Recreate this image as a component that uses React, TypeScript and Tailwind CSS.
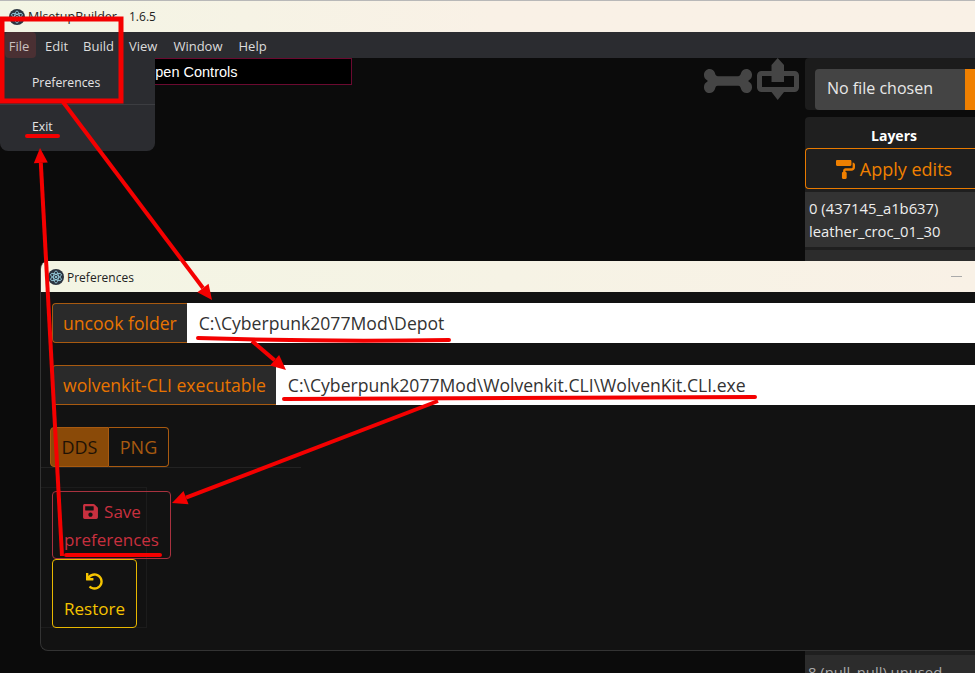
import React from "react";
import { FaBone, FaPaintRoller, FaSave, FaUndo } from "react-icons/fa";

const Logo = () => (
  <svg width="16" height="16" viewBox="0 0 16 16" className="shrink-0">
    <circle cx="8" cy="8" r="8" fill="#2b3440" />
    <g fill="none" stroke="#9fd8ea" strokeWidth="0.8">
      <ellipse cx="8" cy="8" rx="6" ry="2.4" transform="rotate(30 8 8)" />
      <ellipse cx="8" cy="8" rx="6" ry="2.4" transform="rotate(90 8 8)" />
      <ellipse cx="8" cy="8" rx="6" ry="2.4" transform="rotate(150 8 8)" />
    </g>
    <circle cx="8" cy="8" r="1.1" fill="#9fd8ea" />
  </svg>
);

const Arrow = ({ x1, y1, x2, y2, w = 4 }: { x1: number; y1: number; x2: number; y2: number; w?: number }) => {
  const a = Math.atan2(y2 - y1, x2 - x1);
  const l = 15;
  const s = 7;
  const bx = x2 - l * Math.cos(a);
  const by = y2 - l * Math.sin(a);
  const px = -Math.sin(a) * s;
  const py = Math.cos(a) * s;
  return (
    <g>
      <line x1={x1} y1={y1} x2={bx} y2={by} stroke="#f40000" strokeWidth={w} />
      <polygon points={`${x2},${y2} ${bx + px},${by + py} ${bx - px},${by - py}`} fill="#f40000" />
    </g>
  );
};

const Under = ({ d }: { d: string }) => <path d={d} stroke="#f40000" strokeWidth="4" strokeLinecap="round" fill="none" />;

const Field = ({ label, value }: { label: string; value: string }) => (
  <div className="flex h-10 items-stretch">
    <div className="flex items-center rounded-l border border-r-0 border-[#a85a10] bg-[#2a2a2a] px-[10px] text-[17.6px] text-[#e87400]">
      {label}
    </div>
    <div className="flex flex-1 items-center bg-white pl-3 text-[17.6px] text-[#333]">{value}</div>
  </div>
);

export default function App() {
  return (
    <div
      className="relative h-[673px] w-[975px] overflow-hidden bg-[#0b0b0b] text-[13px]"
      style={{ fontFamily: '"Open Sans", "Noto Sans", sans-serif' }}
    >
      <div className="h-px bg-[#b8b8b8]" />
      <div className="flex h-[31px] items-center gap-[3px] bg-gradient-to-r from-[#f3f5e4] via-[#f9f1e6] to-[#f9f1e6] pl-[9px] pt-px text-[#222]">
        <Logo />
        <span className="w-[98px] whitespace-nowrap text-[12.5px]">MlsetupBuilder</span>
        <span className="text-[12px]">1.6.5</span>
      </div>
      <nav className="flex h-[26px] items-stretch bg-[#2b2c30] pl-[5px] text-[13px] text-[#dcdcdc]">
        <span className="flex w-[31px] items-center justify-center rounded-sm bg-[#4a3033] pr-[3px] pt-[3px] text-[#c9c0c0]">File</span>
        <span className="ml-[9px] flex items-center pt-[3px]">Edit</span>
        <span className="ml-[15px] flex items-center pt-[3px]">Build</span>
        <span className="ml-[15px] flex items-center pt-[3px]">View</span>
        <span className="ml-[16px] flex items-center pt-[3px]">Window</span>
        <span className="ml-[16px] flex items-center pt-[3px]">Help</span>
      </nav>

      <div className="flex h-[615px]">
        <main className="flex flex-1 items-start justify-between pl-[100px] pr-[5px]">
          <div
            className="flex h-[27px] w-[252px] items-center border border-[#6b0a30] bg-black pl-[43px] pt-[3px] text-[14.5px] text-white"
            style={{ fontFamily: '"Liberation Sans", sans-serif' }}
          >
            Open Controls
          </div>
          <div className="flex items-start gap-[5px] text-[#454545]">
            <FaBone size={48} className="-mt-[1px]" />
            <svg width="43" height="42" viewBox="0 0 43 42">
              <path d="M20.7 0L27 7V24H14.5V7Z M14.5 34H27L20.7 42Z" fill="#454545" />
              <rect x="2.5" y="15.5" width="37" height="16" rx="2" fill="none" stroke="#454545" strokeWidth="5" />
            </svg>
          </div>
        </main>
        <aside className="flex w-[170px] flex-col gap-[7px]">
          <div className="h-[52px] rounded-l bg-[#1c1c1c] pl-[10px] pt-[11px]">
            <div className="flex h-[41px] overflow-hidden rounded-l bg-[#444]">
              <span className="flex flex-1 items-center pb-1 pl-3 text-[16px] text-[#e8e8e8]">No file chosen</span>
              <span className="w-[10px] bg-[#f08000]" />
            </div>
          </div>
          <div className="flex flex-1 flex-col rounded-tl bg-[#1f1f1f]">
            <div className="flex h-[31px] items-center justify-center pl-[8px] pt-[5px] text-[14px] font-bold text-white">Layers</div>
            <div className="flex h-[41px] items-center justify-center gap-[5px] rounded-l border border-r-0 border-[#e87a00] pl-[7px] pt-[1px] text-[18px] text-[#f08000]">
              <FaPaintRoller size={19} />
              Apply edits
            </div>
            <div className="mt-[3px] flex h-[55px] flex-col justify-center bg-[#333] pl-1 text-[14.8px] leading-[23px] text-[#eee]">
              <span>0 (437145_a1b637)</span>
              <span>leather_croc_01_30</span>
            </div>
            <div className="mt-[3px] h-[16px] bg-[#2c2c2c]" />
            <div className="flex-1" />
            <div className="h-[18px] overflow-hidden bg-[#2c2c2c] pl-[3px] text-[14.8px] leading-[34px] text-[#aaa]">8 (null_null) unused</div>
          </div>
        </aside>
      </div>

      <div className="absolute left-0 top-[58px] flex h-[93px] w-[155px] flex-col rounded-b-lg bg-[#2b2c30] text-[12.25px] text-[#e4e4e4]">
        <div className="flex h-[46px] items-center pl-[32px] pt-[4px]">Preferences</div>
        <div className="h-px bg-[#3c3d41]" />
        <div className="flex flex-1 items-center pb-[2px] pl-[32px]">Exit</div>
      </div>

      <section className="absolute left-[40px] top-[261px] flex h-[390px] w-[935px] flex-col overflow-hidden rounded-l-lg border-b border-l border-[#333] bg-[#121212]">
        <header className="flex h-[31px] shrink-0 items-center gap-[3px] bg-gradient-to-r from-[#f3f5e4] to-[#f9f1e6] pl-[7px] pr-[13px] text-[12px] text-[#222]">
          <Logo />
          <span className="flex-1 pt-[3px]">Preferences</span>
          <span className="h-px w-[11px] bg-[#aaa]" />
        </header>
        <div className="flex flex-col pl-[11px] pt-[11px]">
          <Field label="uncook folder" value={"C:\\Cyberpunk2077Mod\\Depot"} />
          <div className="h-[22px]" />
          <Field label="wolvenkit-CLI executable" value={"C:\\Cyberpunk2077Mod\\Wolvenkit.CLI\\WolvenKit.CLI.exe"} />
          <div className="mt-[22px] flex h-10 w-[119px] -translate-x-[2px] text-[18px]">
            <span className="flex w-[59px] items-center justify-center rounded-l border border-[#a85a10] bg-[#8a4a08] text-[#1e1206]">DDS</span>
            <span className="flex flex-1 items-center justify-center rounded-r border border-l-0 border-[#a85a10] text-[#a85a10]">PNG</span>
          </div>
        </div>
        <div className="h-px w-[260px] bg-[#222]" />
        <div className="mt-[19px] flex h-[141px] w-[106px] flex-col items-start border border-l-0 border-[#1c1c1c] pl-[11px] pt-[3px]">
          <button className="flex h-[68px] w-[119px] shrink-0 flex-col items-center justify-center rounded border border-[#a8323f] pt-[1px] text-[17px] leading-[28px] text-[#c8303f]">
            <span className="flex items-center gap-[5px]">
              <FaSave size={17} />
              Save
            </span>
            <span>preferences</span>
          </button>
          <button className="flex h-[69px] w-[85px] shrink-0 flex-col items-center justify-center rounded border border-[#e8b800] pt-[9px] text-[17px] leading-[28px] text-[#f5c400]">
            <FaUndo size={17} className="mb-[5px]" />
            <span>Restore</span>
          </button>
        </div>
      </section>

      <svg className="pointer-events-none absolute left-0 top-0" width="975" height="673" viewBox="0 0 975 673">
        <rect x="2" y="19" width="119" height="82" fill="none" stroke="#f40000" strokeWidth="5" />
        <Arrow x1={63} y1={102} x2={212} y2={300} />
        <Under d="M27 136 H58" />
        <Arrow x1={62} y1={556} x2={40} y2={148} />
        <Under d="M198 338 Q320 342 449 340" />
        <Arrow x1={252} y1={341} x2={286} y2={370} />
        <Under d="M284 399 Q500 399 755 397" />
        <Arrow x1={438} y1={401} x2={172} y2={503} />
        <Under d="M66 555 H160" />
      </svg>
    </div>
  );
}
